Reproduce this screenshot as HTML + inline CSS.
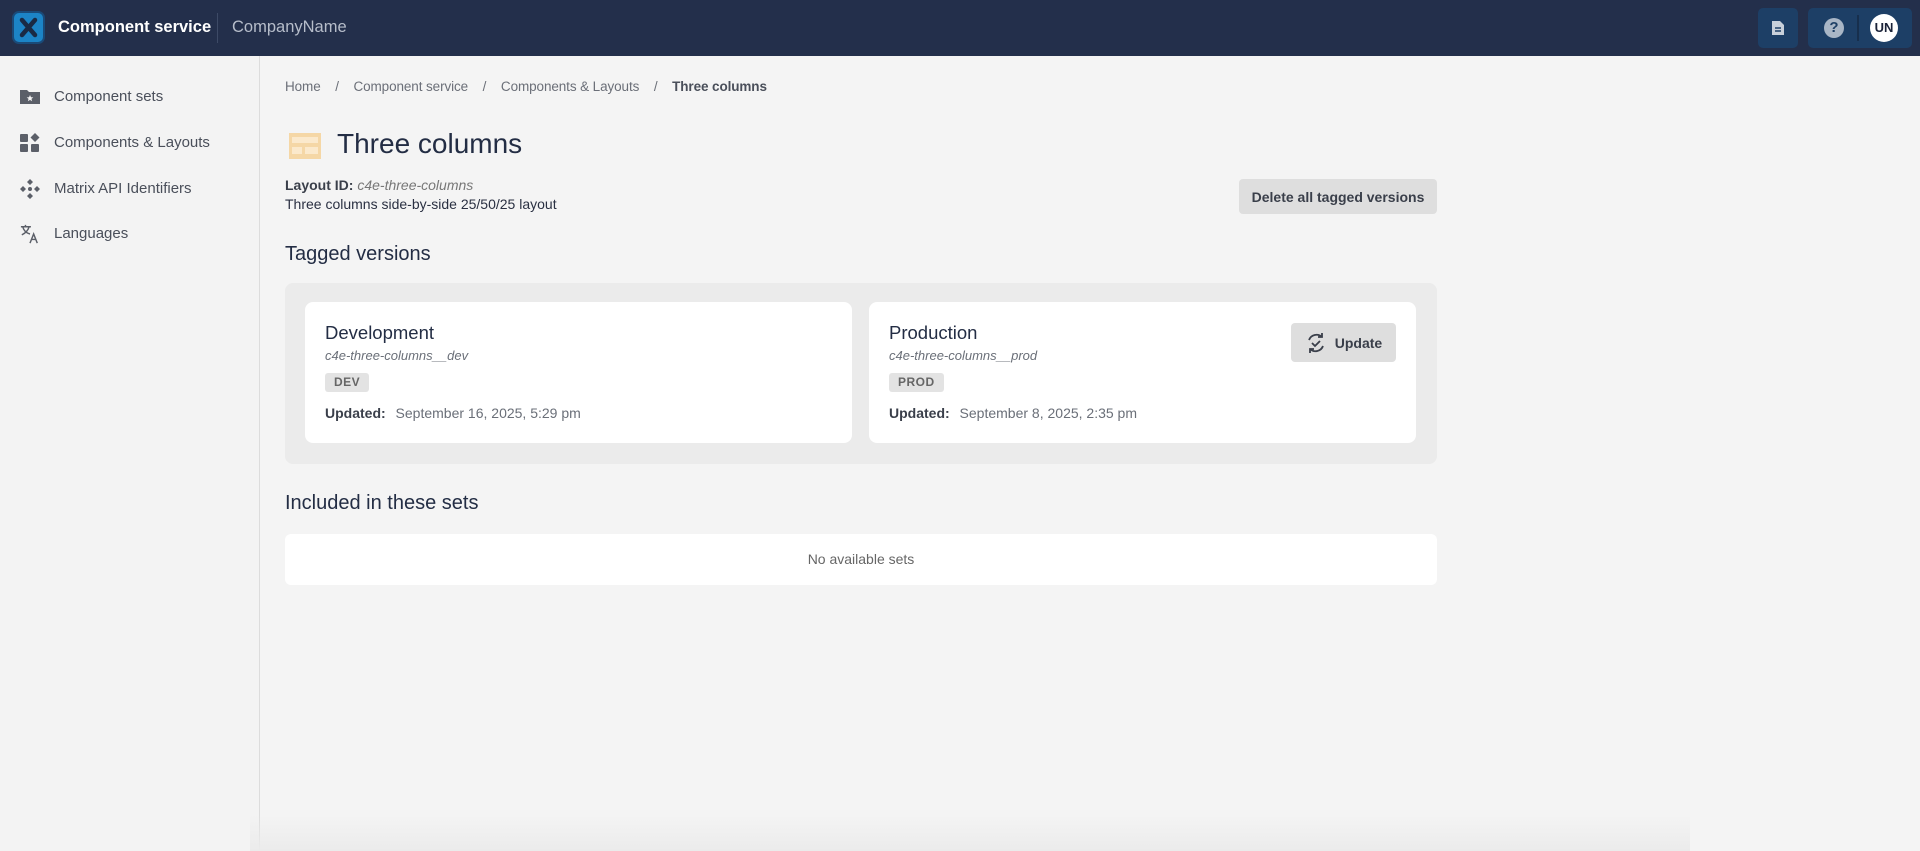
<!DOCTYPE html>
<html><head><meta charset="utf-8"><style>
*{box-sizing:border-box;margin:0;padding:0}
body{width:1920px;height:851px;overflow:hidden;background:#f4f4f4;font-family:"Liberation Sans",sans-serif;color:#2a3042;position:relative}
.hdr{position:absolute;left:0;top:0;width:1920px;height:56px;background:#232f4b}
.logo{position:absolute;left:12px;top:11px;width:33px;height:33px;border-radius:7px;background:#1c84c6;border:2px solid #1a4a78}
.app{position:absolute;left:58px;top:18px;color:#fff;font-size:16.5px;font-weight:bold}
.sep{position:absolute;left:217px;top:13px;width:1px;height:30px;background:#3d4a66}
.co{position:absolute;left:232px;top:18px;color:#b6bdca;font-size:16.5px}
.hb{position:absolute;top:8px;height:40px;background:#1d3f66;border-radius:5px}
.side{position:absolute;left:0;top:56px;width:260px;height:795px;border-right:1px solid #dcdcdc;background:#f3f3f3}
.nav{position:absolute;left:54px;font-size:15px;color:#4a4f5a}
.ic{position:absolute;left:20px;width:20px;height:20px}
.bc{position:absolute;top:79px;left:285px;font-size:13.5px;color:#6b6f78;white-space:pre;letter-spacing:-0.1px}
.bc b{color:#4a4f5a}
.t{position:absolute;white-space:nowrap}
.btn{position:absolute;background:#dedede;border-radius:4px;font-weight:bold;font-size:14px;color:#3a3f4a;display:flex;align-items:center;justify-content:center}
.panel{position:absolute;left:285px;top:283px;width:1152px;height:181px;background:#ebebeb;border-radius:8px}
.card{position:absolute;top:19px;width:547px;height:141px;background:#fff;border-radius:8px}
.card .h{position:absolute;left:20px;top:20px;font-size:18.5px;color:#232d44}
.card .id{position:absolute;left:20px;top:46px;font-size:13px;font-style:italic;color:#6a6f78}
.card .bd{position:absolute;left:20px;top:71px;height:19px;padding:0 9px;background:#e3e3e3;border-radius:3px;font-size:12px;font-weight:bold;color:#666;line-height:19px;letter-spacing:.5px}
.card .u{position:absolute;left:20px;top:103px;font-size:14px;color:#6a6f78}
.card .u b{color:#3a3f4a;margin-right:6px}
</style></head><body>
<div class="hdr">
 <div class="logo"><svg width="29" height="29" viewBox="0 0 29 29"><path d="M8 7 L21 22 M21 7 L8 22" stroke="#1a2a44" stroke-width="4.5" stroke-linecap="round"/></svg></div>
 <div class="app">Component service</div>
 <div class="sep"></div>
 <div class="co">CompanyName</div>
 <div class="hb" style="left:1758px;width:40px"><svg style="position:absolute;left:12px;top:12px" width="16" height="16" viewBox="0 0 16 16"><path d="M2 1h8l4 4v10H2z" fill="#c8d0da"/><path d="M5 8h6M5 11h6" stroke="#1d3f66" stroke-width="1.5"/></svg></div>
 <div class="hb" style="left:1808px;width:104px">
  <div style="position:absolute;left:16px;top:10px;width:20px;height:20px;border-radius:50%;background:#a9b6c6;color:#1d3f66;font-weight:bold;font-size:15px;text-align:center;line-height:20px">?</div>
  <div style="position:absolute;left:49px;top:7px;width:2px;height:26px;background:#172f4d"></div>
  <div style="position:absolute;left:62px;top:6px;width:28px;height:28px;border-radius:50%;background:#fff;color:#1a2238;font-weight:bold;font-size:13px;text-align:center;line-height:28px">UN</div>
 </div>
</div>
<div class="side">
 <svg class="ic" style="top:31px" viewBox="0 0 20 20"><path d="M0 3h7l2 2h11v12H0z" fill="#5b5f68"/><path d="M10 8l1 2.2 2.3.2-1.8 1.5.6 2.3-2.1-1.3-2.1 1.3.6-2.3-1.8-1.5 2.3-.2z" fill="#f3f3f3"/></svg>
 <div class="nav" style="top:32px">Component sets</div>
 <svg class="ic" style="top:77px" viewBox="0 0 20 20"><rect x="0" y="1" width="8" height="8" rx="1" fill="#5b5f68"/><rect x="0" y="11" width="8" height="8" rx="1" fill="#5b5f68"/><rect x="11" y="11" width="8" height="8" rx="1" fill="#5b5f68"/><path d="M15 0l4.5 4.5L15 9l-4.5-4.5z" fill="#5b5f68"/></svg>
 <div class="nav" style="top:78px">Components &amp; Layouts</div>
 <svg class="ic" style="top:123px" viewBox="0 0 20 20"><path d="M10 0l3 3-3 3-3-3zM10 14l3 3-3 3-3-3zM0 10l3-3 3 3-3 3zM14 10l3-3 3 3-3 3z" fill="#5b5f68"/><circle cx="10" cy="10" r="2" fill="#5b5f68"/></svg>
 <div class="nav" style="top:124px">Matrix API Identifiers</div>
 <svg class="ic" style="top:168px" viewBox="0 0 22 22"><path d="M1 3h11M6 1v2M3 3c1 4 4 7 8 8M10 3c-1 4-4 7-8 9" stroke="#5b5f68" stroke-width="1.6" fill="none"/><path d="M11 21l4-10 4 10M12.5 17h5" stroke="#5b5f68" stroke-width="1.6" fill="none"/></svg>
 <div class="nav" style="top:169px">Languages</div>
</div>
<div class="bc">Home    /    Component service    /    Components &amp; Layouts    /    <b>Three columns</b></div>
<svg style="position:absolute;left:289px;top:133px" width="32" height="26" viewBox="0 0 32 26"><rect width="32" height="26" fill="#f5d7a6"/><rect x="3" y="4" width="26" height="6" fill="#fbe9cc"/><rect x="3" y="14" width="10" height="7" fill="#fbe9cc"/><rect x="16" y="14" width="13" height="7" fill="#fbe9cc"/></svg>
<div class="t" style="left:337px;top:128px;font-size:28px;color:#232d44">Three columns</div>
<div class="t" style="left:285px;top:177px;font-size:14px;color:#3a3f4a"><b>Layout ID:</b> <i style="color:#777">c4e-three-columns</i></div>
<div class="t" style="left:285px;top:196px;font-size:14px;color:#2a3042">Three columns side-by-side 25/50/25 layout</div>
<div class="btn" style="left:1239px;top:179px;width:198px;height:35px">Delete all tagged versions</div>
<div class="t" style="left:285px;top:243px;font-size:20px;color:#232d44">Tagged versions</div>
<div class="panel">
 <div class="card" style="left:20px"><div class="h">Development</div><div class="id">c4e-three-columns__dev</div><div class="bd">DEV</div><div class="u"><b>Updated:</b> September 16, 2025, 5:29 pm</div></div>
 <div class="card" style="left:584px"><div class="h">Production</div><div class="id">c4e-three-columns__prod</div><div class="bd">PROD</div><div class="u"><b>Updated:</b> September 8, 2025, 2:35 pm</div>
  <div class="btn" style="left:422px;top:21px;width:105px;height:39px"><svg width="22" height="22" viewBox="0 0 22 22" style="margin-right:8px"><path d="M4 8a8 8 0 0 1 13-3M18 14a8 8 0 0 1-13 3" stroke="#3a3f4a" stroke-width="1.8" fill="none"/><path d="M17 1v4h-4M5 21v-4h4" stroke="#3a3f4a" stroke-width="1.8" fill="none"/><path d="M7 11l3 3 5-5" stroke="#3a3f4a" stroke-width="1.8" fill="none"/></svg>Update</div></div>
</div>
<div class="t" style="left:285px;top:492px;font-size:20px;color:#232d44">Included in these sets</div>
<div style="position:absolute;left:285px;top:534px;width:1152px;height:51px;background:#fff;border-radius:6px;text-align:center;line-height:51px;font-size:14px;color:#666">No available sets</div>
<div style="position:absolute;left:250px;top:815px;width:1440px;height:36px;background:linear-gradient(#f4f4f400,#ebebeb);"></div>
</body></html>
